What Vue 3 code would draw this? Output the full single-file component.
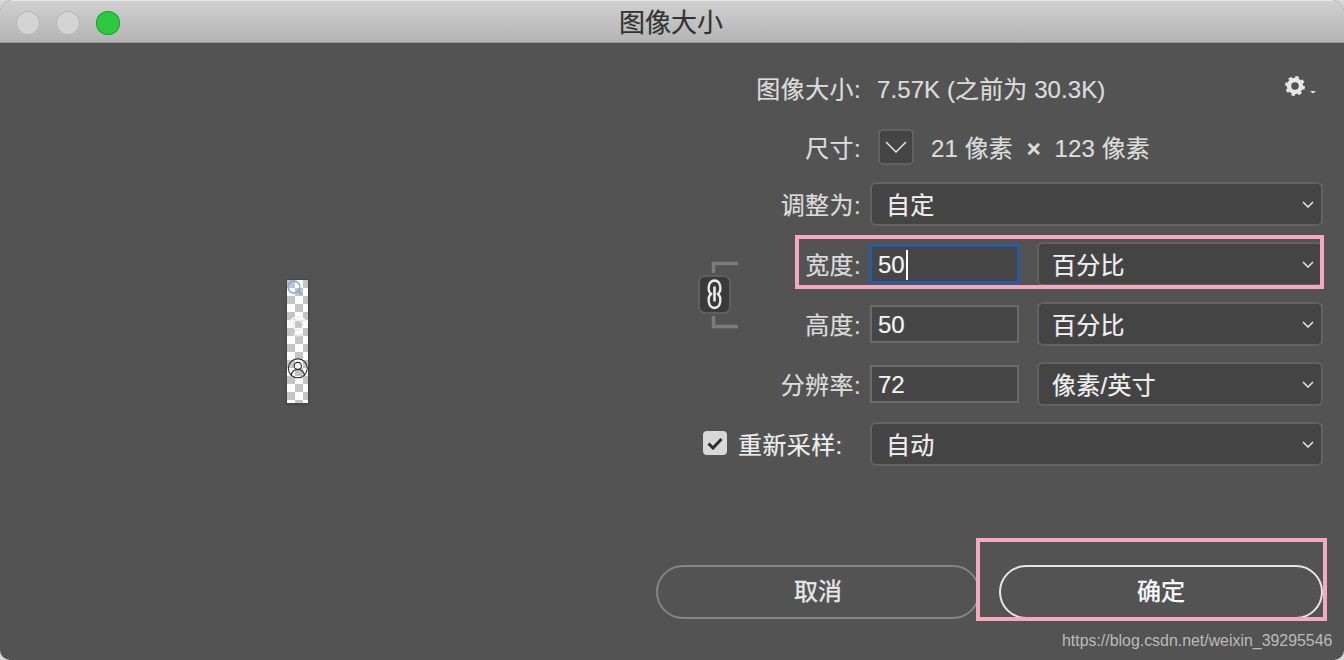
<script setup>
const pickers = [
  { label: '分辨率:', value: '72', unit: '像素/英寸' },
]
</script>

<template>
  <div class="dialog">
    <header class="titlebar">
      <div class="lights">
        <i class="light"></i>
        <i class="light"></i>
        <i class="light green"></i>
      </div>
      <span class="title">图像大小</span>
    </header>

    <main class="content">
      <section class="preview">
        <div class="thumb">
          <svg width="21" height="123" viewBox="0 0 21 123" fill="none">
            <circle cx="7" cy="7" r="6" stroke="#6aa8e0" stroke-width="1.3" />
            <path d="M11.500 11.500l3.500 3.500" stroke="#6aa8e0" stroke-width="1.300" />
            <path d="M2 46a9 9 0 0 1 18 0" stroke="#f4f4f4" stroke-width="2" />
            <circle cx="11" cy="45" r="5" stroke="#eee" stroke-width="2" />
            <path d="M6 54a9 9 0 0 0 10 0" stroke="#e4e4e4" stroke-width="2" />
            <circle cx="10.800" cy="88.300" r="9.500" stroke="#2a2a2a" stroke-width="1.100" />
            <circle cx="10.800" cy="86" r="3.600" stroke="#2a2a2a" stroke-width="1.100" />
            <path d="M4 95.500c.8-4 3.400-6 6.800-6s6 2 6.800 6" stroke="#2a2a2a" stroke-width="1.100" />
          </svg>
        </div>
      </section>

      <section class="form">
        <div class="row">
          <span class="lbl">图像大小:</span>
          <span class="info">7.57K (之前为 30.3K)</span>
          <svg class="gear" width="32" height="22" viewBox="0 0 32 22">
            <circle cx="10" cy="10" r="6" fill="none" stroke="#e6e6e6" stroke-width="4.500" />
            <circle cx="10" cy="10" r="8.500" fill="none" stroke="#e6e6e6" stroke-width="3" stroke-dasharray="3.400 3.275" />
            <path d="M25 15h6l-3 2.500z" fill="#e6e6e6" />
          </svg>
        </div>

        <div class="row size">
          <span class="lbl">尺寸:</span>
          <span class="toggle">
            <svg width="22" height="12" viewBox="0 0 22 12" fill="none"><path d="M1 1l10 10L21 1" stroke="#e4e4e4" stroke-width="1.500" /></svg>
          </span>
          <span class="info dims">21 像素 <b>×</b> 123 像素</span>
        </div>

        <div class="row">
          <span class="lbl">调整为:</span>
          <div class="select grow">
            <span>自定</span>
            <svg class="chev" width="12" height="7" viewBox="0 0 12 7" fill="none"><path d="M1 1l5 5 5-5" stroke="#e4e4e4" stroke-width="1.500" /></svg>
          </div>
        </div>

        <div class="linked">
          <div class="link">
            <svg width="40" height="68" viewBox="0 0 40 68" fill="none">
              <path d="M15.500 12V2.500H40M15.500 55v10.500H40" stroke="#7b7b7b" stroke-width="3.500" />
              <rect x="1" y="15" width="31" height="37" rx="6" fill="#3a3a3a" stroke="#5f5f5f" stroke-width="2" />
              <path d="M13 33C9.500 30 9.500 20 16.500 19.500 23.500 20 23.500 30 20 33 23.500 36 23.500 46.500 16.500 47 9.500 46.500 9.500 36 13 33Z" stroke="#ececec" stroke-width="2.400" />
              <path d="M16.500 25.500v15" stroke="#ececec" stroke-width="2.600" />
            </svg>
          </div>
          <div class="pair">
            <div class="row">
              <span class="lbl short">宽度:</span>
              <div class="field focused">50<i class="caret"></i></div>
              <div class="select unit">
                <span>百分比</span>
                <svg class="chev" width="12" height="7" viewBox="0 0 12 7" fill="none"><path d="M1 1l5 5 5-5" stroke="#e4e4e4" stroke-width="1.500" /></svg>
              </div>
            </div>
            <div class="row">
              <span class="lbl short">高度:</span>
              <div class="field">50</div>
              <div class="select unit">
                <span>百分比</span>
                <svg class="chev" width="12" height="7" viewBox="0 0 12 7" fill="none"><path d="M1 1l5 5 5-5" stroke="#e4e4e4" stroke-width="1.500" /></svg>
              </div>
            </div>
          </div>
        </div>

        <div v-for="p in pickers" :key="p.label" class="row">
          <span class="lbl">{{ p.label }}</span>
          <div class="field">{{ p.value }}</div>
          <div class="select unit">
            <span>{{ p.unit }}</span>
            <svg class="chev" width="12" height="7" viewBox="0 0 12 7" fill="none"><path d="M1 1l5 5 5-5" stroke="#e4e4e4" stroke-width="1.500" /></svg>
          </div>
        </div>

        <div class="row">
          <span class="check">
            <svg width="16" height="13" viewBox="0 0 16 13" fill="none"><path d="M1.500 6.500l4.500 4.500 8.500-9" stroke="#2e2e2e" stroke-width="3" /></svg>
          </span>
          <span class="lbl resample">重新采样:</span>
          <div class="select grow">
            <span>自动</span>
            <svg class="chev" width="12" height="7" viewBox="0 0 12 7" fill="none"><path d="M1 1l5 5 5-5" stroke="#e4e4e4" stroke-width="1.500" /></svg>
          </div>
        </div>

        <div class="actions">
          <button class="btn">取消</button>
          <button class="btn primary">确定</button>
        </div>
      </section>
    </main>

    <!-- annotations drawn on top of the screenshot -->
    <div class="mark mark-width"></div>
    <div class="mark mark-ok"></div>
    <span class="watermark">https://blog.csdn.net/weixin_39295546</span>
  </div>
</template>

<style>
html, body { margin: 0; background: #d9d9d9; }
</style>

<style scoped>
.dialog {
  position: relative;
  width: 1344px;
  height: 660px;
  overflow: hidden;
  display: flex;
  flex-direction: column;
  border-radius: 12px 12px 10px 10px;
  background: #535353;
  font-family: "Liberation Sans", "Noto Sans CJK SC", sans-serif;
  font-size: 24px;
  color: #dcdcdc;
  -webkit-text-stroke: 0.2px currentColor;
}
.titlebar {
  position: relative;
  flex: none;
  height: 43px;
  display: flex;
  align-items: center;
  justify-content: center;
  box-sizing: border-box;
  border-top: 1px solid #e6e6e6;
  border-bottom: 1px solid #9a9a9a;
  background: linear-gradient(#d0d0d0, #b4b4b4);
}
.lights { position: absolute; left: 16px; top: 10px; display: flex; gap: 16px; }
.light {
  width: 24px;
  height: 24px;
  border-radius: 50%;
  background: #d4d4d4;
  box-shadow: inset 0 0 0 1px #b5b5b5;
}
.light.green { background: #2bc840; box-shadow: inset 0 0 0 1px #1fa32f; }
.title { font-size: 26px; color: #333; margin-left: -2px; margin-top: -2px; }

.content { flex: 1; display: flex; }
.preview { width: 595px; display: flex; justify-content: center; padding-top: 236px; box-sizing: border-box; }
.thumb {
  width: 21px;
  height: 123px;
  line-height: 0;
  border: 1px solid #484848;
  box-shadow: 0 1px 2px #444;
  background-color: #fff;
  background-image: repeating-conic-gradient(#c4c4c4 0 25%, #fff 0 50%);
  background-size: 16px 16px;
  background-position: 8px 0;
}

.form {
  width: 623px;
  margin-left: 105px;
  padding-top: 23px;
  display: flex;
  flex-direction: column;
  gap: 16px;
}
.row { position: relative; height: 44px; display: flex; align-items: center; }
.lbl {
  flex: none;
  box-sizing: border-box;
  width: 161px;
  margin-right: 9px;
  padding-bottom: 2px;
  text-align: right;
  white-space: nowrap;
  letter-spacing: 0.4px;
}
.lbl.short { width: 66px; }
.lbl.resample { width: 106px; margin: 0 26px 0 11px; text-align: left; color: #eee; }

.info { margin-left: 7px; padding-bottom: 2px; white-space: nowrap; letter-spacing: 0.1px; }
.gear { margin-left: auto; margin-right: 6px; margin-top: -3px; }
.size { margin-top: -1px; margin-bottom: -3px; }
.toggle {
  box-sizing: border-box;
  width: 36px;
  height: 36px;
  margin-left: 8px;
  margin-top: -1px;
  display: flex;
  align-items: center;
  justify-content: center;
  background: #444;
  border: 2px solid #626262;
  border-radius: 5px;
}
.dims { margin-left: 17px; }
.dims b { margin: 0 7px; }

.select {
  box-sizing: border-box;
  height: 44px;
  display: flex;
  align-items: center;
  justify-content: space-between;
  padding: 0 7px 2px 14px;
  background: #444;
  border: 2px solid #626262;
  border-radius: 6px;
  color: #f0f0f0;
  letter-spacing: 0.3px;
}
.select .chev { margin-top: 3px; }
.grow { flex: 1; }
.unit { width: 286px; margin-left: 18px; padding-left: 13px; }
.chev { flex: none; }

.field {
  position: relative;
  box-sizing: border-box;
  width: 149px;
  height: 38px;
  display: flex;
  align-items: center;
  padding: 1px 0 0 6px;
  background: #464646;
  border: 2px solid #6a6a6a;
  color: #f4f4f4;
}
.field.focused { border-color: #2a5a9f; box-shadow: 0 0 0 1px #2a5a9f; }
.caret { width: 2px; height: 30px; margin-left: 1px; background: #fff; }

.linked { display: flex; height: 104px; }
.link { flex: none; width: 95px; display: flex; align-items: center; }
.link svg { margin-left: -2px; margin-top: 2px; }
.pair { flex: 1; display: flex; flex-direction: column; gap: 16px; }

.check {
  flex: none;
  width: 24px;
  height: 24px;
  margin-left: 3px;
  margin-top: -2px;
  display: flex;
  align-items: center;
  justify-content: center;
  background: #d8d8d8;
  border-radius: 4px;
}

.actions { display: flex; gap: 19px; margin: 83px 0 0 -44px; }
.btn {
  width: 324px;
  height: 54px;
  padding-bottom: 7px;
  border: 2px solid #858585;
  border-radius: 27px;
  background: transparent;
  color: #e8e8e8;
  font: inherit;
  -webkit-text-stroke: 0.35px currentColor;
}
.btn.primary { border-color: #e6e6e6; color: #fff; }

.mark { position: absolute; box-sizing: border-box; border: 4px solid #f4a9c0; pointer-events: none; }
.mark-width { left: 795px; top: 235px; width: 529px; height: 54px; }
.mark-ok { left: 976px; top: 538px; width: 351px; height: 83px; }
.watermark {
  position: absolute;
  left: 1062px;
  top: 632px;
  font-size: 15.900px;
  color: #bbb;
  white-space: nowrap;
  -webkit-text-stroke: 0;
}
</style>
